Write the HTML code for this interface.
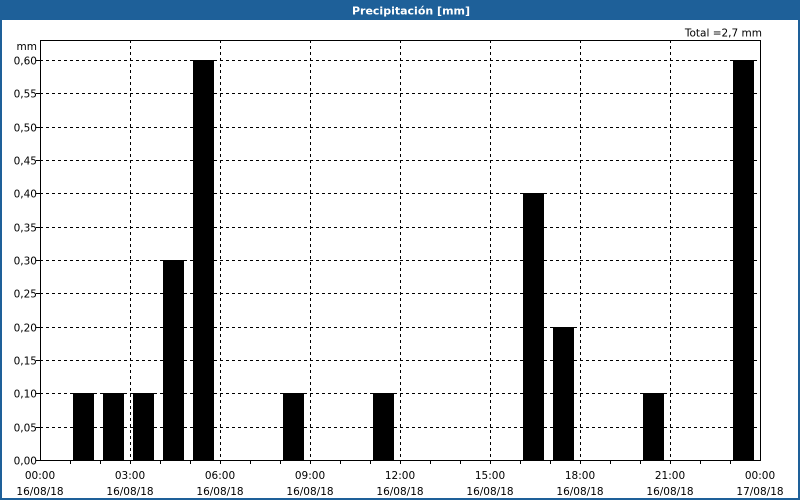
<!DOCTYPE html>
<html><head><meta charset="utf-8"><style>
html,body{margin:0;padding:0;background:#fff}
svg{display:block}
text{font-family:"DejaVu Sans","Liberation Sans",sans-serif;font-size:10.5px;fill:#000}
</style></head><body>
<svg width="800" height="500" xmlns="http://www.w3.org/2000/svg" shape-rendering="crispEdges">
<rect x="0" y="0" width="800" height="500" fill="#1e6099"/>
<rect x="2" y="20" width="796" height="478" fill="#fff"/>
<text x="411" y="14.5" text-anchor="middle" style="font-weight:bold;font-size:11px;fill:#fff">Precipitación [mm]</text>
<text x="762" y="36.5" text-anchor="end">Total =2,7 mm</text>
<text x="37" y="50" text-anchor="end">mm</text>
<g stroke="#000" stroke-width="1" stroke-dasharray="3,3">
<line x1="40" y1="60.5" x2="760" y2="60.5"/><line x1="40" y1="93.5" x2="760" y2="93.5"/>
<line x1="40" y1="127.5" x2="760" y2="127.5"/><line x1="40" y1="160.5" x2="760" y2="160.5"/>
<line x1="40" y1="193.5" x2="760" y2="193.5"/><line x1="40" y1="227.5" x2="760" y2="227.5"/>
<line x1="40" y1="260.5" x2="760" y2="260.5"/><line x1="40" y1="293.5" x2="760" y2="293.5"/>
<line x1="40" y1="327.5" x2="760" y2="327.5"/><line x1="40" y1="360.5" x2="760" y2="360.5"/>
<line x1="40" y1="393.5" x2="760" y2="393.5"/><line x1="40" y1="427.5" x2="760" y2="427.5"/>
<line x1="130.5" y1="40" x2="130.5" y2="460"/><line x1="220.5" y1="40" x2="220.5" y2="460"/>
<line x1="310.5" y1="40" x2="310.5" y2="460"/><line x1="400.5" y1="40" x2="400.5" y2="460"/>
<line x1="490.5" y1="40" x2="490.5" y2="460"/><line x1="580.5" y1="40" x2="580.5" y2="460"/>
<line x1="670.5" y1="40" x2="670.5" y2="460"/>
</g>
<g fill="#000">
<rect x="73" y="393" width="21" height="67"/><rect x="103" y="393" width="21" height="67"/>
<rect x="133" y="393" width="21" height="67"/><rect x="163" y="260" width="21" height="200"/>
<rect x="193" y="60" width="21" height="400"/><rect x="283" y="393" width="21" height="67"/>
<rect x="373" y="393" width="21" height="67"/><rect x="523" y="193" width="21" height="267"/>
<rect x="553" y="327" width="21" height="133"/><rect x="643" y="393" width="21" height="67"/>
<rect x="733" y="60" width="21" height="400"/>
</g>
<rect x="40.5" y="40.5" width="720" height="420" fill="none" stroke="#000"/>
<g stroke="#000">
<path d="M70.5 461v3M100.5 461v3M130.5 461v3M160.5 461v3M190.5 461v3M220.5 461v3M250.5 461v3M280.5 461v3M310.5 461v3M340.5 461v3M370.5 461v3M400.5 461v3M430.5 461v3M460.5 461v3M490.5 461v3M520.5 461v3M550.5 461v3M580.5 461v3M610.5 461v3M640.5 461v3M670.5 461v3M700.5 461v3M730.5 461v3M36 60.5h4M36 93.5h4M36 127.5h4M36 160.5h4M36 193.5h4M36 227.5h4M36 260.5h4M36 293.5h4M36 327.5h4M36 360.5h4M36 393.5h4M36 427.5h4M36 460.5h4"/>
</g>
<g text-anchor="end">
<text x="37" y="64.5">0,60</text><text x="37" y="97.5">0,55</text><text x="37" y="131.5">0,50</text>
<text x="37" y="164.5">0,45</text><text x="37" y="197.5">0,40</text><text x="37" y="231.5">0,35</text>
<text x="37" y="264.5">0,30</text><text x="37" y="297.5">0,25</text><text x="37" y="331.5">0,20</text>
<text x="37" y="364.5">0,15</text><text x="37" y="397.5">0,10</text><text x="37" y="431.5">0,05</text>
<text x="37" y="464.5">0,00</text>
</g>
<g text-anchor="middle">
<text x="40" y="479">00:00</text><text x="40" y="495">16/08/18</text>
<text x="130" y="479">03:00</text><text x="130" y="495">16/08/18</text>
<text x="220" y="479">06:00</text><text x="220" y="495">16/08/18</text>
<text x="310" y="479">09:00</text><text x="310" y="495">16/08/18</text>
<text x="400" y="479">12:00</text><text x="400" y="495">16/08/18</text>
<text x="490" y="479">15:00</text><text x="490" y="495">16/08/18</text>
<text x="580" y="479">18:00</text><text x="580" y="495">16/08/18</text>
<text x="670" y="479">21:00</text><text x="670" y="495">16/08/18</text>
<text x="760" y="479">00:00</text><text x="760" y="495">17/08/18</text>
</g>
</svg>
</body></html>
